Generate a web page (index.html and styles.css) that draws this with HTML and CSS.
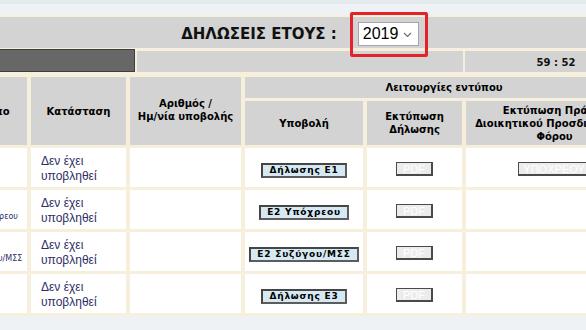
FILE: index.html
```html
<!DOCTYPE html>
<html lang="el">
<head>
<meta charset="utf-8">
<title>Δηλώσεις έτους</title>
<link rel="stylesheet" href="styles.css">
</head>
<body>
<div class="topstrip"></div>
<div class="page">
  <div class="titlebar">
    <span class="title">ΔΗΛΩΣΕΙΣ ΕΤΟΥΣ :</span>
    <span class="year-wrap">
      <span class="select"><span class="select-value">2019</span><svg class="chev" width="9" height="6" viewBox="0 0 9 6"><path d="M1 1 L4.5 4.5 L8 1" fill="none" stroke="#6b6b6b" stroke-width="1.1"/></svg></span>
      <span class="highlight"></span>
    </span>
  </div>
  <div class="statusbar">
    <div class="userbox"></div>
    <div class="statuscell wide"></div>
    <div class="statuscell timer">59 : 52</div>
  </div>
  <table class="forms">
    <colgroup>
      <col class="c0"><col class="c1"><col class="c2"><col class="c3"><col class="c4"><col class="c5">
    </colgroup>
    <thead>
      <tr class="hr1">
        <th rowspan="2" class="h-form">Έντυπο</th>
        <th rowspan="2">Κατάσταση</th>
        <th rowspan="2" class="h-top">Αριθμός /<br>Ημ/νία υποβολής</th>
        <th colspan="3">Λειτουργίες εντύπου</th>
      </tr>
      <tr class="hr2">
        <th>Υποβολή</th>
        <th>Εκτύπωση<br>Δήλωσης</th>
        <th class="nowrap">Εκτύπωση Πράξης<br>Διοικητικού Προσδιορισμού<br>Φόρου</th>
      </tr>
    </thead>
    <tbody>
      <tr>
        <td class="form-name"></td>
        <td class="status"><span class="status-text">Δεν έχει υποβληθεί</span></td>
        <td></td>
        <td class="center"><span class="btn-submit">Δήλωσης Ε1</span></td>
        <td class="center"><span class="btn-pdf">PDF</span></td>
        <td class="center"><span class="btn-pdf">ΥΠΟΧΡΕΟΥ</span></td>
      </tr>
      <tr>
        <td class="form-name">Ε2 Υπόχρεου</td>
        <td class="status"><span class="status-text">Δεν έχει υποβληθεί</span></td>
        <td></td>
        <td class="center"><span class="btn-submit">Ε2 Υπόχρεου</span></td>
        <td class="center"><span class="btn-pdf">PDF</span></td>
        <td></td>
      </tr>
      <tr>
        <td class="form-name">Ε2 Συζύγου/ΜΣΣ</td>
        <td class="status"><span class="status-text">Δεν έχει υποβληθεί</span></td>
        <td></td>
        <td class="center"><span class="btn-submit">Ε2 Συζύγου/ΜΣΣ</span></td>
        <td class="center"><span class="btn-pdf">PDF</span></td>
        <td></td>
      </tr>
      <tr>
        <td class="form-name"></td>
        <td class="status"><span class="status-text">Δεν έχει υποβληθεί</span></td>
        <td></td>
        <td class="center"><span class="btn-submit">Δήλωσης Ε3</span></td>
        <td class="center"><span class="btn-pdf">PDF</span></td>
        <td></td>
      </tr>
    </tbody>
  </table>
</div>
</body>
</html>
```

FILE: styles.css
```css
html, body {
  margin: 0;
  padding: 0;
}
body {
  background: #eef2f4;
  overflow: hidden;
  width: 586px;
  height: 330px;
  font-family: "DejaVu Sans", Verdana, sans-serif;
  color: #000;
}
.topstrip {
  height: 4px;
  background: #e3e9ed;
}
.page {
  width: 694px;
  margin: 11px 0 0 -47px;
  padding-top: 2px;
  background: #f5efdc;
}
.titlebar {
  height: 31px;
  background: #d3d3d3;
  display: flex;
  align-items: center;
  justify-content: center;
  gap: 21px;
}
.title {
  font-weight: bold;
  font-size: 15px;
  color: #111;
  padding-top: 2px;
}
.year-wrap {
  position: relative;
  display: inline-flex;
  margin-top: 3px;
}
.select {
  box-sizing: border-box;
  width: 61px;
  height: 24px;
  background: #fff;
  border: 1px solid #a6a6a6;
  display: flex;
  align-items: center;
  justify-content: space-between;
  padding: 0 6px 0 4px;
  font-family: "Liberation Sans", Arial, sans-serif;
  font-size: 16px;
  color: #000;
}
.chev {
  margin-top: 1px;
}
.highlight {
  position: absolute;
  left: -8px;
  right: -9px;
  top: -10px;
  bottom: -11px;
  border: 3px solid #e3222b;
  border-radius: 2px;
}
.statusbar {
  margin-top: 1px;
  display: flex;
  align-items: flex-end;
  gap: 2px;
}
.userbox {
  box-sizing: border-box;
  width: 182px;
  height: 23px;
  background: #676767;
  border: 1px solid #3e3e3e;
}
.statuscell {
  height: 21px;
  background: #d3d3d3;
}
.statuscell.wide {
  width: 326px;
}
.statuscell.timer {
  flex: 1;
  display: flex;
  align-items: center;
  justify-content: center;
  font-size: 10px;
  font-weight: bold;
  padding-top: 1px;
  box-sizing: border-box;
  color: #111;
}
.forms {
  margin-top: 2px;
  width: 694px;
  table-layout: fixed;
  border-collapse: separate;
  border-spacing: 4px 3px;
}
.c0 { width: 70px; }
.c1 { width: 95px; }
.c2 { width: 111px; }
.c3 { width: 118px; }
.c4 { width: 95px; }
.c5 { width: 177px; }
.forms th {
  background: #d3d3d3;
  font-size: 10px;
  font-weight: bold;
  line-height: 13px;
  padding: 0;
  text-align: center;
  vertical-align: middle;
  color: #000;
}
.forms th.h-form {
  padding-right: 8px;
}
.forms th.h-top {
  padding-bottom: 2px;
}
.forms th.nowrap {
  white-space: nowrap;
}
.hr1 th { height: 21px; }
.hr2 th { height: 44px; }
.forms td {
  background: #fff;
  height: 39px;
  padding: 0;
  vertical-align: middle;
}
.forms td.center {
  text-align: center;
}
.form-name {
  font-size: 8px;
  text-align: right;
  padding-right: 9px !important;
  padding-top: 14px !important;
  box-sizing: border-box;
  color: #2e2e66;
  white-space: nowrap;
}
.status {
  padding-left: 10px !important;
}
.status-text {
  display: block;
  width: 70px;
  font-family: "Liberation Sans", Arial, sans-serif;
  font-size: 12px;
  line-height: 15px;
  color: #2e2e66;
  padding-top: 2px;
}
.btn-submit {
  display: inline-block;
  box-sizing: border-box;
  height: 15px;
  line-height: 11px;
  padding: 0 6px;
  background: #d6e9f3;
  border: 2px solid #5c5c5c;
  border-top-color: #454545;
  border-left-color: #454545;
  font-size: 9px;
  font-weight: bold;
  letter-spacing: 0.8px;
  color: #000;
  white-space: nowrap;
}
.btn-pdf {
  display: inline-block;
  box-sizing: border-box;
  height: 14px;
  line-height: 12px;
  padding: 0 4px;
  min-width: 37px;
  background: #ececec;
  border: 1px solid #4a4a4a;
  border-right-width: 2px;
  border-bottom-width: 2px;
  font-family: "Liberation Sans", Arial, sans-serif;
  font-size: 11px;
  color: #fff;
  white-space: nowrap;
  text-align: center;
}
```
